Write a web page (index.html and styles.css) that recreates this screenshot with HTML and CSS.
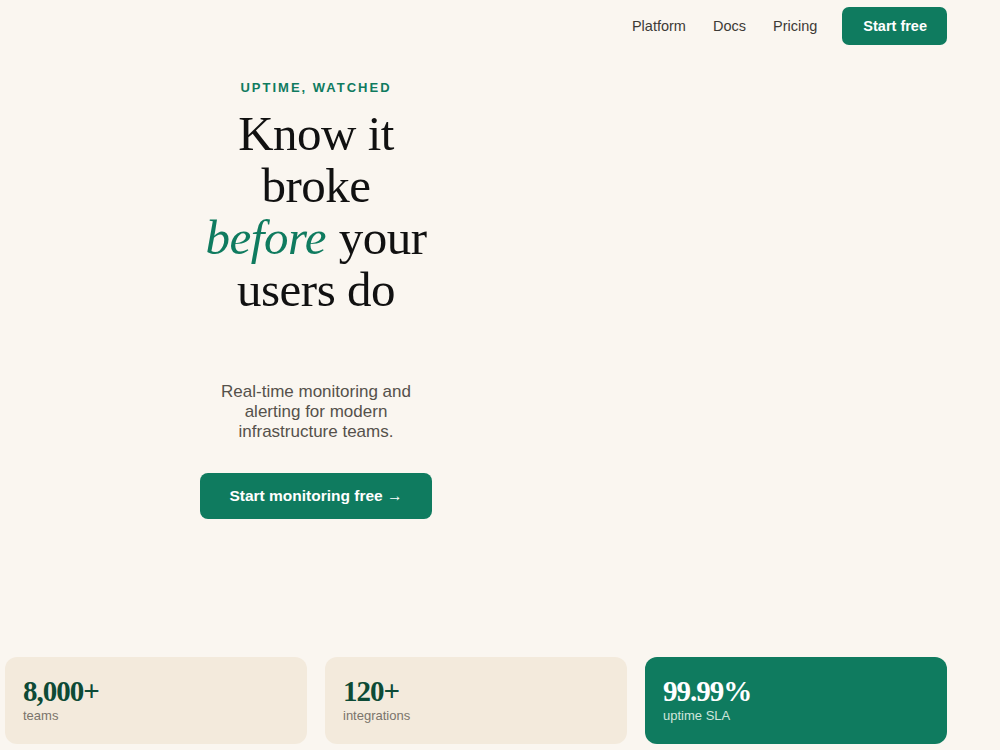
FILE: index.html
```html
<!DOCTYPE html>
<html>
<head>
    <title>Uptime, watched</title>
    <meta charset="UTF-8">
    <link rel="stylesheet" href="styles.css">
</head>
<body>
    <div class="page">
        <nav class="topnav">
            <a href="#">Platform</a>
            <a href="#">Docs</a>
            <a href="#">Pricing</a>
            <a href="#" class="btn btn-small">Start free</a>
        </nav>

        <section class="hero">
            <div class="hero-copy">
                <p class="eyebrow">UPTIME, WATCHED</p>
                <h1>Know it broke <em>before</em> your users do</h1>
                <p class="lead">Real-time monitoring and alerting for modern infrastructure teams.</p>
                <a href="#" class="btn btn-large">Start monitoring free &rarr;</a>
            </div>
        </section>

        <section class="stats">
            <div class="stat">
                <strong>8,000+</strong>
                <span>teams</span>
            </div>
            <div class="stat">
                <strong>120+</strong>
                <span>integrations</span>
            </div>
            <div class="stat stat-accent">
                <strong>99.99%</strong>
                <span>uptime SLA</span>
            </div>
        </section>
    </div>
</body>
</html>
```

FILE: styles.css
```css
body {
    margin: 0;
    background-color: #faf6f0;
    color: #1a1a1a;
    font-family: "Liberation Sans", Arial, sans-serif;
}
a {
    text-decoration: none;
}
.page {
    padding: 0 53px 0 5px;
}
.topnav {
    display: flex;
    justify-content: flex-end;
    align-items: center;
    gap: 27px;
    padding-top: 7px;
    height: 38px;
}
.topnav a {
    color: #3d3a36;
    font-size: 14.5px;
}
.btn {
    display: inline-block;
    background-color: #0f7b5f;
    color: #fff !important;
    font-weight: bold;
    border-radius: 7px;
}
.topnav .btn-small {
    margin-left: -2px;
    padding: 0 20px 0 21px;
    line-height: 38px;
}
.hero {
    display: grid;
    grid-template-columns: 1fr 1fr 1fr;
    column-gap: 18px;
}
.hero-copy {
    grid-column: span 2;
    width: 232px;
    margin: 0 auto;
    text-align: center;
}
.eyebrow {
    margin: 35px 0 0;
    color: #0f7b5f;
    font-size: 13px;
    font-weight: bold;
    letter-spacing: 2px;
    line-height: 16px;
}
h1 {
    margin: 12px 0 0;
    font-family: "Liberation Serif", "Times New Roman", serif;
    font-weight: normal;
    font-size: 49px;
    line-height: 52px;
    letter-spacing: -0.5px;
    color: #111;
}
h1 em {
    padding-right: 1px;
    color: #0f7b5f;
}
.lead {
    margin: 66px 0 0;
    color: #55514b;
    font-size: 17px;
    line-height: 20px;
}
.btn-large {
    margin-top: 31px;
    width: 232px;
    line-height: 46px;
    font-size: 15.5px;
    border-radius: 8px;
}
.stats {
    display: grid;
    grid-template-columns: 1fr 1fr 1fr;
    gap: 18px;
    margin-top: 138px;
}
.stat {
    background-color: #f3eadc;
    border-radius: 12px;
    padding: 19px 18px 21px;
    height: 47px;
}
.stat strong {
    display: block;
    font-family: "Liberation Serif", "Times New Roman", serif;
    font-size: 29px;
    line-height: 30px;
    letter-spacing: -1px;
    color: #0d4a36;
}
.stat span {
    display: block;
    margin-top: 2px;
    font-size: 13px;
    color: #7a746b;
}
.stat-accent {
    background-color: #0f7b5f;
}
.stat-accent strong {
    color: #fff;
}
.stat-accent span {
    color: #cfe6dc;
}
```
